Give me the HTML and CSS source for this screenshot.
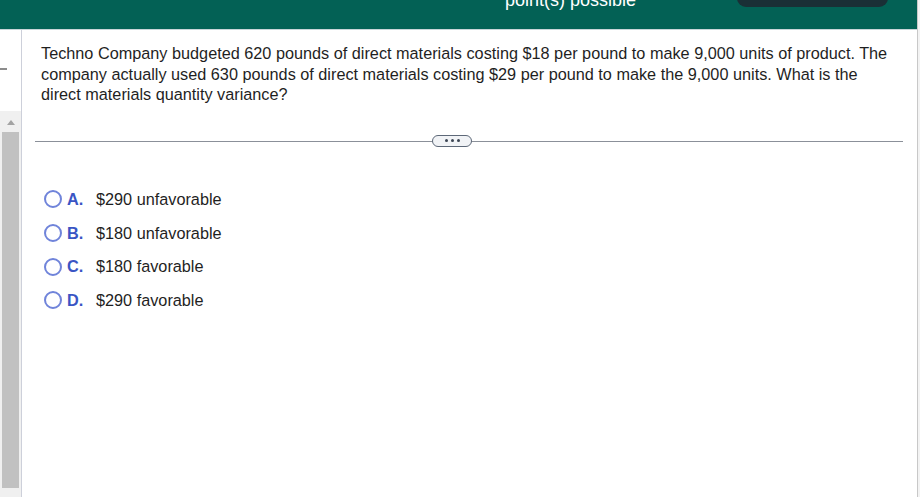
FILE: index.html
```html
<!DOCTYPE html>
<html>
<head>
<meta charset="utf-8">
<link rel="stylesheet" href="styles.css">
</head>
<body>
<div class="page">
  <div class="main-col">
    <header class="top">
      <span class="points">point(s) possible</span>
      <span class="pill"></span>
    </header>
    <div class="body-row">
      <aside class="side">
        <div class="side-top"><span class="dash"></span></div>
        <div class="track">
          <span class="arrow"></span>
          <span class="thumb"></span>
        </div>
      </aside>
      <main class="content">
        <p class="question">Techno Company budgeted 620 pounds of direct materials costing $18 per pound to make 9,000 units of product. The company actually used 630 pounds of direct materials costing $29 per pound to make the 9,000 units. What is the direct materials quantity variance?</p>
        <div class="divider">
          <span class="more"><i></i><i></i><i></i></span>
        </div>
        <ul class="options">
          <li><span class="radio"></span><span class="letter">A.</span><span class="ans">$290 unfavorable</span></li>
          <li><span class="radio"></span><span class="letter">B.</span><span class="ans">$180 unfavorable</span></li>
          <li><span class="radio"></span><span class="letter">C.</span><span class="ans">$180 favorable</span></li>
          <li><span class="radio"></span><span class="letter">D.</span><span class="ans">$290 favorable</span></li>
        </ul>
      </main>
    </div>
  </div>
  <div class="edge"></div>
</div>
</body>
</html>
```
FILE: styles.css
```css
html, body {
  margin: 0;
  padding: 0;
  height: 100%;
  overflow: hidden;
  background: #ffffff;
}
body {
  font-family: "Liberation Sans", Arial, sans-serif;
  color: #1f1f1f;
}
.page {
  display: flex;
  height: 497px;
  width: 920px;
}
.main-col {
  width: 917px;
  display: flex;
  flex-direction: column;
}
.top {
  height: 29px;
  background: #036155;
  border-bottom: 1px solid #c9d5d8;
  display: flex;
  align-items: flex-start;
  overflow: hidden;
}
.points {
  margin-left: 505px;
  margin-top: -10px;
  font-size: 18px;
  line-height: 20px;
  color: #ffffff;
  white-space: nowrap;
}
.pill {
  margin-left: auto;
  margin-right: 29px;
  margin-top: -13px;
  width: 151px;
  height: 20px;
  border-radius: 9px;
  background: #1a2f36;
}
.body-row {
  flex: 1;
  display: flex;
}
.side {
  width: 21px;
  border-right: 1px solid #cdd0da;
  display: flex;
  flex-direction: column;
}
.side-top {
  height: 81px;
  background: #ffffff;
}
.dash {
  display: block;
  margin-top: 38px;
  width: 7px;
  height: 2px;
  background: #8c8c8c;
}
.track {
  flex: 1;
  background: #f0f0f0;
  display: flex;
  flex-direction: column;
  align-items: center;
  padding-bottom: 9px;
}
.arrow {
  margin-top: 9px;
  width: 0;
  height: 0;
  border-left: 4px solid transparent;
  border-right: 4px solid transparent;
  border-bottom: 5px solid #a3a3a3;
}
.thumb {
  margin-top: 7px;
  width: 17px;
  flex: 1;
  background: #c1c1c1;
}
.content {
  flex: 1;
  padding: 13px 14px 0 13px;
}
.question {
  margin: 0 0 0 6px;
  font-size: 16.25px;
  line-height: 20.5px;
  color: #1f1f1f;
  max-width: 852px;
}
.divider {
  margin-top: 36px;
  height: 1px;
  background: #8b9099;
  position: relative;
}
.more {
  position: absolute;
  left: 397px;
  top: -6px;
  width: 38px;
  height: 10px;
  border: 1px solid #5d6878;
  border-radius: 6px;
  background: #f1f3f6;
  display: flex;
  justify-content: center;
  align-items: center;
  gap: 3px;
}
.more i {
  display: block;
  width: 3px;
  height: 3px;
  border-radius: 50%;
  background: #3c4654;
}
.options {
  list-style: none;
  margin: 41px 0 0 9px;
  padding: 0;
}
.options li {
  display: flex;
  align-items: center;
  height: 33.7px;
  font-size: 16.25px;
}
.radio {
  width: 14px;
  height: 14px;
  border: 2px solid #7084da;
  border-radius: 50%;
  box-sizing: content-box;
  flex: none;
}
.letter {
  margin-left: 5px;
  width: 29px;
  font-weight: bold;
  color: #3a55c4;
}
.ans {
  color: #1f1f1f;
}
.edge {
  width: 2px;
  border-left: 1px solid #c8c8c8;
  background: #f3f3f3;
}
```
